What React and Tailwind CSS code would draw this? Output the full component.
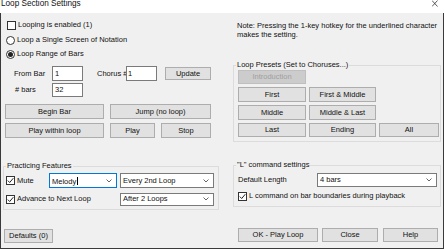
import React from 'react';

const font = { fontFamily: '"Liberation Sans", Arial, sans-serif' };

function Check({ checked }) {
  return (
    <span className="flex h-[9px] w-[9px] shrink-0 items-center justify-center border border-[#333] bg-white">
      {checked && (
        <svg width="7" height="7" viewBox="0 0 7 7">
          <path d="M0.8 3.6 L2.7 5.5 L6.3 1.2" fill="none" stroke="#222" strokeWidth="1" />
        </svg>
      )}
    </span>
  );
}

function Radio({ checked }) {
  return (
    <span className="flex h-[9px] w-[9px] shrink-0 items-center justify-center rounded-full border border-[#333] bg-white">
      {checked && <span className="h-[5px] w-[5px] rounded-full bg-[#222]" />}
    </span>
  );
}

function Btn({ children, className = '' }) {
  return (
    <div className={`flex shrink-0 items-center justify-center border border-[#adadad] bg-[#e1e1e1] ${className}`}>
      {children}
    </div>
  );
}

function Combo({ value, focused, className = '' }) {
  return (
    <div
      className={`flex shrink-0 items-center justify-between border bg-white pl-[2px] pr-[4px] ${
        focused ? 'border-[#0078d7]' : 'border-[#7a7a7a]'
      } ${className}`}
    >
      <span>
        {value}
        {focused && <span className="ml-[0.5px] inline-block h-[8px] w-[1px] translate-y-[1px] bg-black" />}
      </span>
      <svg width="6" height="4" viewBox="0 0 6 4">
        <path d="M0.5 0.5 L3 3 L5.5 0.5" fill="none" stroke="#555" strokeWidth="0.9" />
      </svg>
    </div>
  );
}

function Group({ title, className = '', children }) {
  return (
    <fieldset className={`border border-[#dcdcdc] ${className}`}>
      <legend className="ml-[2px] h-[10px] px-[1px] leading-[10px]">{title}</legend>
      {children}
    </fieldset>
  );
}

export default function App() {
  return (
    <div
      className="h-[249px] w-[444px] overflow-hidden whitespace-nowrap bg-[#f0f0f0] text-[7.5px] leading-none text-[#111]"
      style={font}
    >
      {/* title bar */}
      <div className="flex h-[13px] items-start justify-between bg-white">
        <span className="-mt-[2px] ml-[1px] text-[8.2px] leading-[11px]">Loop Section Settings</span>
        <svg className="mr-[6px]" width="6" height="7" viewBox="0 0 6 7">
          <path d="M0 0.5 L5.5 6.5 M5.5 0.5 L0 6.5" stroke="#333" strokeWidth="0.8" />
        </svg>
      </div>

      <div className="flex h-[236px] border-x border-b border-[#3a3a3a]">
        {/* left column */}
        <div className="flex w-[221px] flex-col">
          <div className="mt-[7px] flex h-[10px] items-center gap-[2px] pl-[6px]">
            <Check />
            <span>Looping is enabled (1)</span>
          </div>
          <div className="mt-[5px] flex h-[10px] items-center gap-[2px] pl-[5px]">
            <Radio />
            <span>Loop a Single Screen of Notation</span>
          </div>
          <div className="mt-[4px] flex h-[10px] items-center gap-[2px] pl-[5px]">
            <Radio checked />
            <span>Loop Range of Bars</span>
          </div>

          <div className="mt-[7px] flex h-[15px] items-center pl-[13px]">
            <span className="w-[38px]">From Bar</span>
            <div className="flex h-[15px] w-[31px] items-center border border-[#7a7a7a] bg-white pl-[2px]">1</div>
            <span className="ml-[14px] w-[29px]">Chorus #</span>
            <div className="flex h-[15px] w-[31px] items-center border border-[#7a7a7a] bg-white pl-[1px]">1</div>
            <Btn className="ml-[8px] h-[13px] w-[46px]">Update</Btn>
          </div>
          <div className="mt-[2px] flex h-[14px] items-center pl-[14px]">
            <span className="w-[37px]">&#35; bars</span>
            <div className="flex h-[14px] w-[31px] items-center border border-[#7a7a7a] bg-white pl-[2px]">32</div>
          </div>

          <div className="mt-[7px] flex h-[15px] pl-[4px]">
            <Btn className="w-[99px]">Begin Bar</Btn>
            <Btn className="ml-[6px] w-[101px]">Jump (no loop)</Btn>
          </div>
          <div className="mt-[4px] flex h-[15px] pl-[4px]">
            <Btn className="w-[99px]">Play within loop</Btn>
            <Btn className="ml-[6px] w-[45px]">Play</Btn>
            <Btn className="ml-[6px] w-[50px]">Stop</Btn>
          </div>

          <Group title="Practicing Features" className="ml-[2px] mt-[23px] w-[216px] pb-[3px]">
            <div className="mt-[2px] flex h-[15px] items-center pl-[2px]">
              <Check checked />
              <span className="w-[34px] pl-[2px]">Mute</span>
              <Combo value="Melody" focused className="h-[15px] w-[68px]" />
              <Combo value="Every 2nd Loop" className="ml-[3px] h-[15px] w-[94px]" />
            </div>
            <div className="mt-[4px] flex h-[14px] items-center pl-[2px]">
              <Check checked />
              <span className="w-[105px] pl-[2px]">Advance to Next Loop</span>
              <Combo value="After 2 Loops" className="h-[13px] w-[94px]" />
            </div>
          </Group>

          <Btn className="ml-[3px] mt-[19px] h-[14px] w-[49px]">Defaults (0)</Btn>
        </div>

        {/* right column */}
        <div className="flex flex-1 flex-col">
          <p className="mt-[8px] pl-[15px] leading-[9px]">
            Note: Pressing the 1-key hotkey for the underlined character
            <br />
            makes the setting.
          </p>

          <Group title="Loop Presets (Set to Choruses...)" className="ml-[11px] mt-[21px] w-[208px] pb-[4px]">
            <div className="flex flex-col gap-[3px] pl-[4px]">
              <div className="flex h-[14px]">
                <div className="flex w-[68px] items-center justify-center border border-[#bfbfbf] bg-[#cccccc] text-[#a0a0a0]">
                  Introduction
                </div>
              </div>
              <div className="flex h-[15px] gap-[3px]">
                <Btn className="w-[68px]">First</Btn>
                <Btn className="w-[67px]">First &amp; Middle</Btn>
              </div>
              <div className="flex h-[15px] gap-[3px]">
                <Btn className="w-[68px]">Middle</Btn>
                <Btn className="w-[67px]">Middle &amp; Last</Btn>
              </div>
              <div className="flex h-[14px] gap-[3px]">
                <Btn className="w-[68px]">Last</Btn>
                <Btn className="w-[67px]">Ending</Btn>
                <Btn className="w-[60px]">All</Btn>
              </div>
            </div>
          </Group>

          <Group title={'"L" command settings'} className="ml-[11px] mt-[18px] w-[208px] pb-[5px]">
            <div className="mt-[3px] flex h-[14px] items-center pl-[4px]">
              <span className="w-[79px]">Default Length</span>
              <Combo value="4 bars" className="h-[14px] w-[120px]" />
            </div>
            <div className="mt-[4px] flex h-[10px] items-center gap-[2px] pl-[4px]">
              <Check checked />
              <span>L command on bar boundaries during playback</span>
            </div>
          </Group>

          <div className="mt-[21px] flex h-[14px]">
            <Btn className="ml-[16px] w-[80px] border-[#0078d7]">OK - Play Loop</Btn>
            <Btn className="ml-[4px] w-[56px]">Close</Btn>
            <Btn className="ml-[5px] w-[55px]">Help</Btn>
          </div>
        </div>
      </div>
    </div>
  );
}
